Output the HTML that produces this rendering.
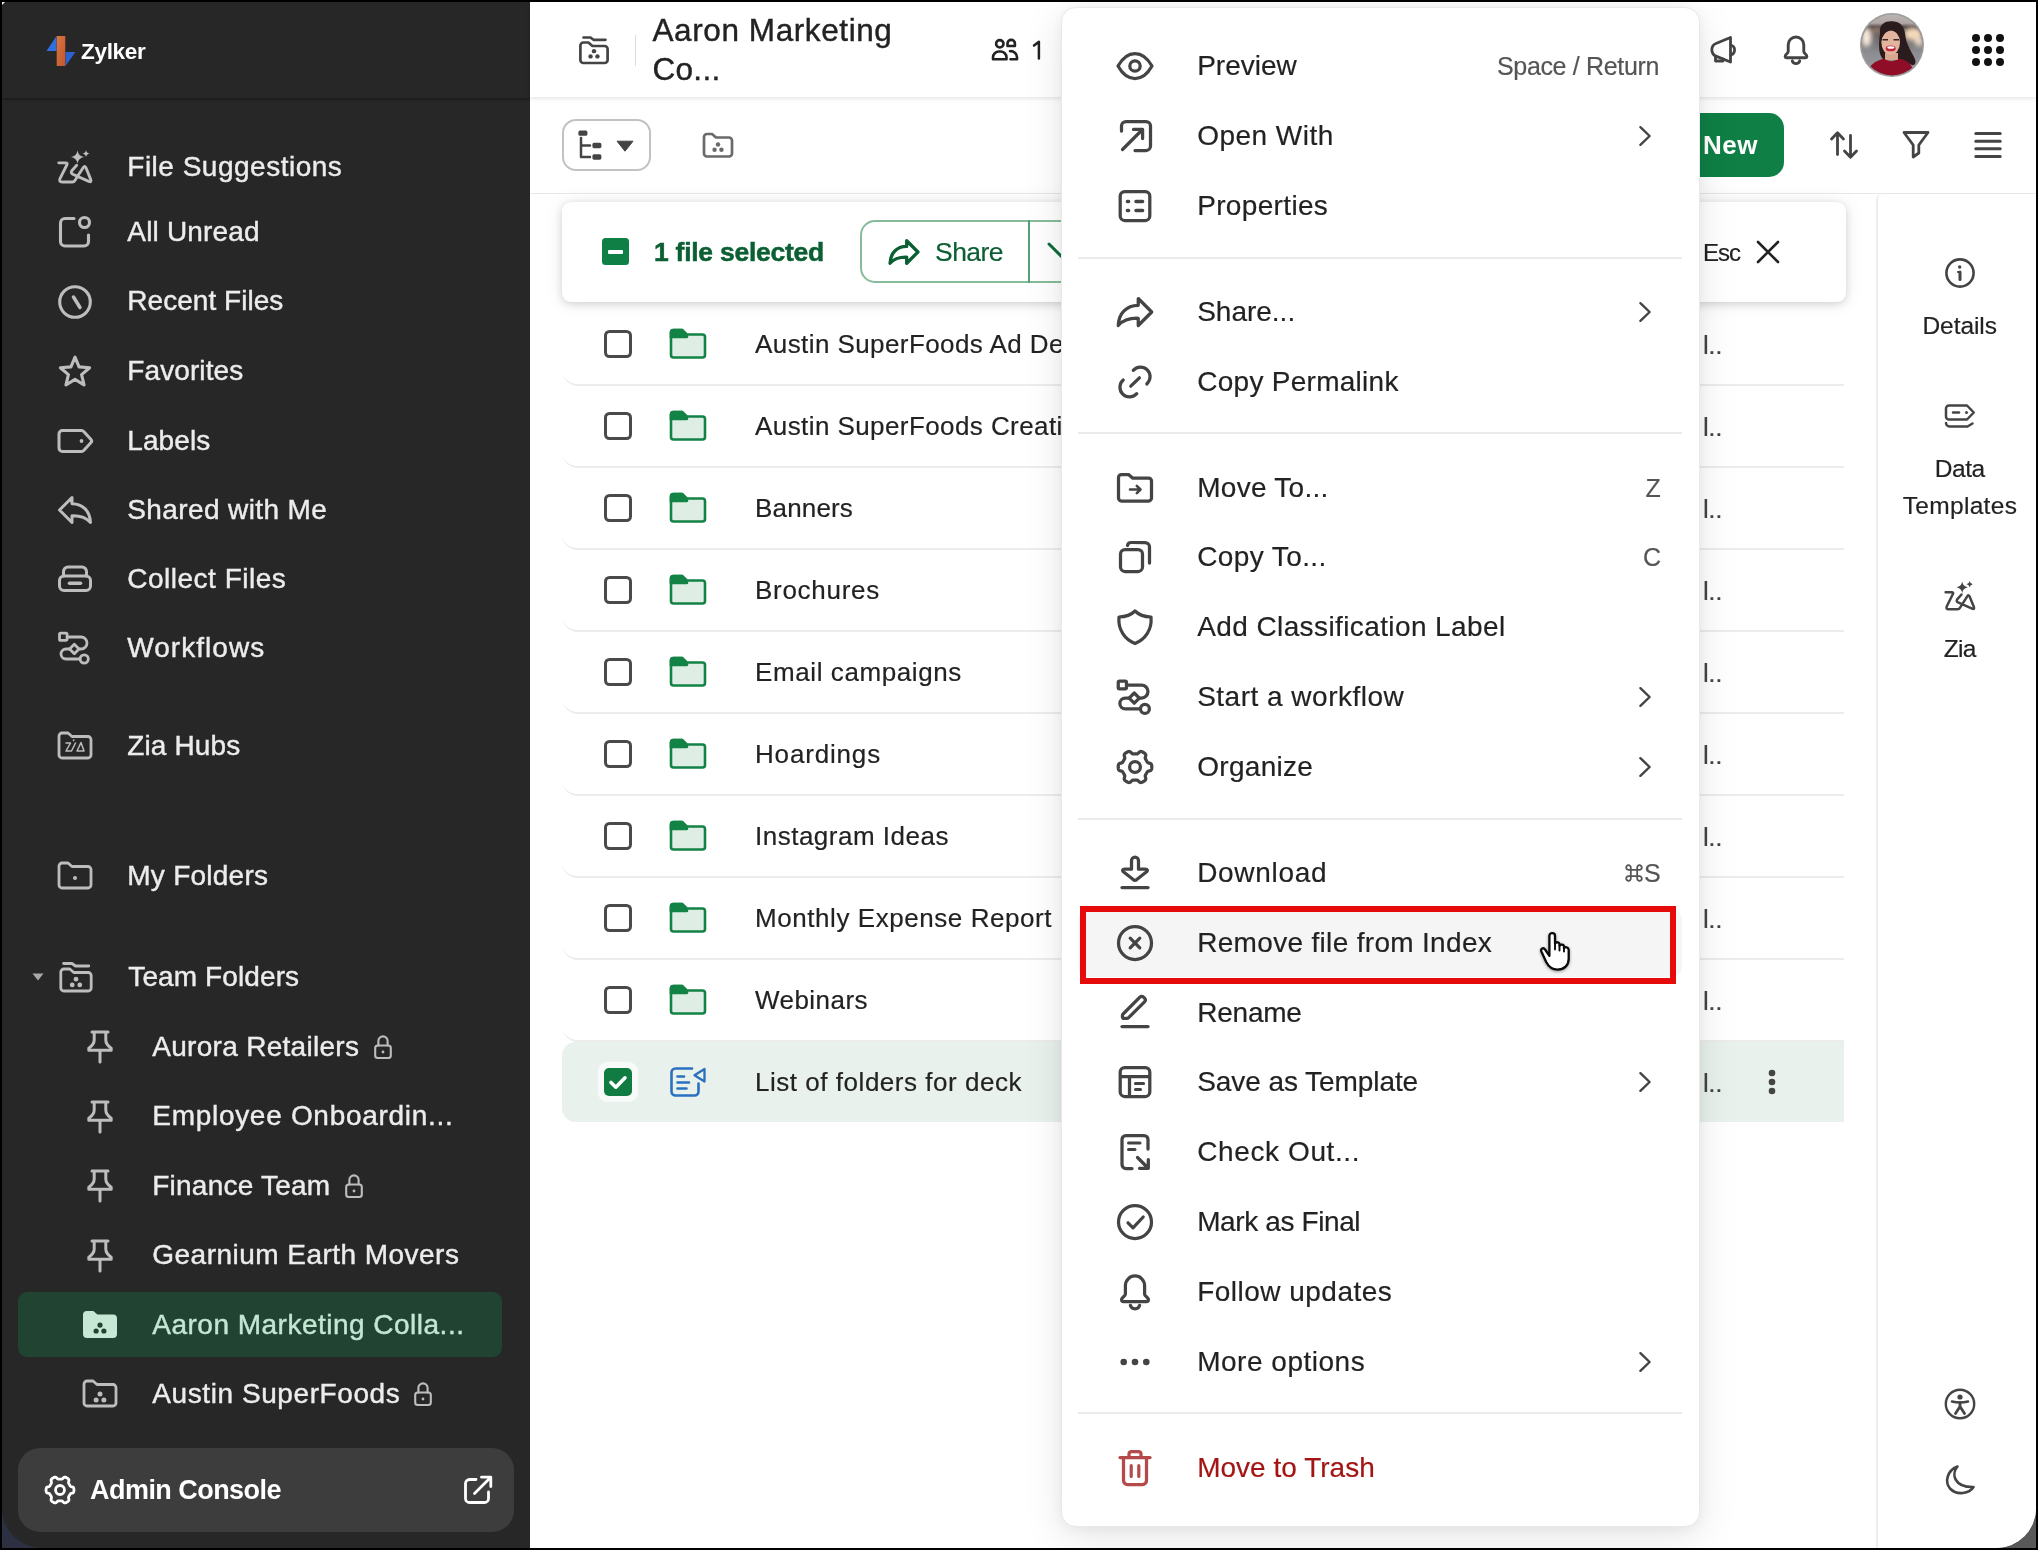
<!DOCTYPE html>
<html><head><meta charset="utf-8"><title>Zylker WorkDrive</title>
<style>
html,body{margin:0;padding:0;background:#000;}
body{width:2038px;height:1550px;overflow:hidden;font-family:"Liberation Sans",sans-serif;}
#root{position:relative;width:2038px;height:1550px;background:#000;overflow:hidden;opacity:0.999;}
#root div, #root svg{box-sizing:border-box;}

</style></head><body><div id="root">
<div style="position:absolute;left:2px;top:1500px;width:60px;height:48px;background:#2d3040"></div>
<div style="position:absolute;left:2px;top:2px;width:528px;height:1546px;background:#272727;border-bottom-left-radius:40px"></div>
<div style="position:absolute;left:2px;top:2px;width:528px;height:96px;background:#272727;box-shadow:0 1px 3px rgba(0,0,0,.45)"></div>
<div style="position:absolute;left:2px;top:2px;width:0;height:0;border-top:3px solid #eee;border-right:3px solid transparent"></div>
<svg style="position:absolute;left:40.5px;top:31px;overflow:visible;" width="40" height="40" viewBox="-20 -20 40 40"><defs><linearGradient id="lgo" x1="0" y1="0" x2="1" y2="1"><stop offset="0" stop-color="#d8783f"/><stop offset="1" stop-color="#c2542f"/></linearGradient></defs><polygon points="-14.5,0 -4.5,-15 -4.5,0" fill="#2f6fe0"/><polygon points="4.5,1 14.5,1 4.5,15" fill="#2a62cf"/><rect x="-4.3" y="-15" width="8.6" height="30" fill="url(#lgo)"/></svg>
<div style="position:absolute;left:81px;top:36.8px;line-height:29px;font-size:22.5px;font-weight:700;color:#fff;letter-spacing:-0.30px;white-space:pre;-webkit-text-stroke:0;">Zylker</div>
<div style="position:absolute;left:127.3px;top:148.8px;line-height:36px;font-size:28px;font-weight:400;color:#ececec;letter-spacing:0.50px;white-space:pre;-webkit-text-stroke:0.42px currentColor;">File Suggestions</div>
<svg style="position:absolute;left:53px;top:144.5px;overflow:visible;" width="44" height="44" viewBox="-22 -22 44 44"><g fill="none" stroke="#bdbdbd" stroke-width="2.8" stroke-linecap="round" stroke-linejoin="round"><g transform="scale(1.0)"><path d="M-16.3,-4.2 H-9.4 Q-6.9,-4.2 -8.2,-2 L-15,11.6 Q-16.4,15 -12.8,15 H-2.8 Q-0.9,15 0.1,13.2 L8.4,0.2 Q9.8,-1.8 10.9,0.6 L15.8,12.6 Q16.8,15.6 13.8,14.4 L-2.2,7.2 Q-4.6,6 -3.2,3.8 L1.7,-1.7"/><path d="M2.5,-16.6 Q3.4,-11 9,-10 Q3.4,-9 2.5,-3.4 Q1.6,-9 -4,-10 Q1.6,-11 2.5,-16.6 Z" fill="#bdbdbd" stroke="none"/><path d="M11,-17 Q11.5,-13.9 14.6,-13.4 Q11.5,-12.9 11,-9.8 Q10.5,-12.9 7.4,-13.4 Q10.5,-13.9 11,-17 Z" fill="#bdbdbd" stroke="none"/></g></g></svg>
<div style="position:absolute;left:127.3px;top:213.8px;line-height:36px;font-size:28px;font-weight:400;color:#ececec;letter-spacing:0.18px;white-space:pre;-webkit-text-stroke:0.42px currentColor;">All Unread</div>
<svg style="position:absolute;left:53px;top:209.5px;overflow:visible;" width="44" height="44" viewBox="-22 -22 44 44"><g fill="none" stroke="#bdbdbd" stroke-width="3.1" stroke-linecap="round" stroke-linejoin="round"><path d="M-1,-13.5 H-10 a4.5 4.5 0 0 0 -4.5 4.5 V9.5 a4.5 4.5 0 0 0 4.5 4.5 H9 a4.5 4.5 0 0 0 4.5 -4.5 V3"/><circle cx="9.5" cy="-9.5" r="5"/></g></svg>
<div style="position:absolute;left:127.3px;top:283.3px;line-height:36px;font-size:28px;font-weight:400;color:#ececec;letter-spacing:0.03px;white-space:pre;-webkit-text-stroke:0.42px currentColor;">Recent Files</div>
<svg style="position:absolute;left:53px;top:279.5px;overflow:visible;" width="44" height="44" viewBox="-22 -22 44 44"><g fill="none" stroke="#bdbdbd" stroke-width="3.1" stroke-linecap="round" stroke-linejoin="round"><circle r="15.3"/><path d="M-1.5,-5 L5,5.5" stroke-width="3.5"/></g></svg>
<div style="position:absolute;left:127.3px;top:353.3px;line-height:36px;font-size:28px;font-weight:400;color:#ececec;letter-spacing:0.09px;white-space:pre;-webkit-text-stroke:0.42px currentColor;">Favorites</div>
<svg style="position:absolute;left:53px;top:349px;overflow:visible;" width="44" height="44" viewBox="-22 -22 44 44"><g fill="none" stroke="#bdbdbd" stroke-width="3.1" stroke-linecap="round" stroke-linejoin="round"><polygon points="0.00,-13.90 4.06,-4.08 14.65,-3.26 6.56,3.63 9.05,13.96 0.00,8.40 -9.05,13.96 -6.56,3.63 -14.65,-3.26 -4.06,-4.08" /></g></svg>
<div style="position:absolute;left:127.3px;top:422.8px;line-height:36px;font-size:28px;font-weight:400;color:#ececec;letter-spacing:0.08px;white-space:pre;-webkit-text-stroke:0.42px currentColor;">Labels</div>
<svg style="position:absolute;left:53px;top:418.5px;overflow:visible;" width="44" height="44" viewBox="-22 -22 44 44"><g fill="none" stroke="#bdbdbd" stroke-width="3" stroke-linecap="round" stroke-linejoin="round"><path d="M-12.5,-10.5 H6.5 a3 3 0 0 1 2.2 1 L15.8,-1.8 a2.6 2.6 0 0 1 0 3.6 L8.7,9.5 a3 3 0 0 1 -2.2 1 H-12.5 a3.5 3.5 0 0 1 -3.5 -3.5 V-7 a3.5 3.5 0 0 1 3.5 -3.5 Z"/><circle cx="6.5" cy="0" r="1.9" fill="#bdbdbd" stroke="none"/></g></svg>
<div style="position:absolute;left:127.3px;top:491.8px;line-height:36px;font-size:28px;font-weight:400;color:#ececec;letter-spacing:0.39px;white-space:pre;-webkit-text-stroke:0.42px currentColor;">Shared with Me</div>
<svg style="position:absolute;left:53px;top:488px;overflow:visible;" width="44" height="44" viewBox="-22 -22 44 44"><g fill="none" stroke="#bdbdbd" stroke-width="3" stroke-linecap="round" stroke-linejoin="round"><path d="M-3,-12.5 L-15.5,0 L-3,12.5 V5.8 C6,5.5 11.5,8 15.5,12.5 C15,1 8,-6 -3,-6.2 Z"/></g></svg>
<div style="position:absolute;left:127.3px;top:561.3px;line-height:36px;font-size:28px;font-weight:400;color:#ececec;letter-spacing:0.50px;white-space:pre;-webkit-text-stroke:0.42px currentColor;">Collect Files</div>
<svg style="position:absolute;left:53px;top:557px;overflow:visible;" width="44" height="44" viewBox="-22 -22 44 44"><g fill="none" stroke="#bdbdbd" stroke-width="3" stroke-linecap="round" stroke-linejoin="round"><rect x="-15.5" y="-3" width="31" height="14.5" rx="4.5"/><path d="M-11.5,-3 V-7.5 a4.5 4.5 0 0 1 4.5 -4.5 H7 a4.5 4.5 0 0 1 4.5 4.5 V-3"/><path d="M-5.5,4.3 H5.5" stroke-width="3.6"/></g></svg>
<div style="position:absolute;left:127.3px;top:630.3px;line-height:36px;font-size:28px;font-weight:400;color:#ececec;letter-spacing:1.04px;white-space:pre;-webkit-text-stroke:0.42px currentColor;">Workflows</div>
<svg style="position:absolute;left:53px;top:626px;overflow:visible;" width="44" height="44" viewBox="-22 -22 44 44"><g fill="none" stroke="#bdbdbd" stroke-width="2.8" stroke-linecap="round" stroke-linejoin="round"><g transform="scale(1.0)"><rect x="-15.5" y="-14.8" width="7.6" height="7.2" rx="1.2"/><path d="M-7.8,-11 H6 a6 6 0 0 1 0 12 H3.8"/><path d="M-5.2,1 H-9 a5 5 0 0 0 0 10 H5"/><path d="M-0.7,-3.7 L4,1 L-0.7,5.7 L-5.4,1 Z"/><circle cx="9.2" cy="11" r="4.1"/></g></g></svg>
<div style="position:absolute;left:127.3px;top:728.3px;line-height:36px;font-size:28px;font-weight:400;color:#ececec;letter-spacing:0.12px;white-space:pre;-webkit-text-stroke:0.42px currentColor;">Zia Hubs</div>
<svg style="position:absolute;left:53px;top:724px;overflow:visible;" width="44" height="44" viewBox="-22 -22 44 44"><g fill="none" stroke="#bdbdbd" stroke-width="2.8" stroke-linecap="round" stroke-linejoin="round"><path d="M-16,-7 V-10 a3 3 0 0 1 3 -3 H-7 l4 3.5 H13 a3 3 0 0 1 3 3 V9 a3 3 0 0 1 -3 3 H-13 a3 3 0 0 1 -3 -3 Z"/><g stroke-width="1.5"><path d="M-9,-3 H-4.5 L-9,5 H-4.5"/><path d="M0.5,-3 L-3.5,5 M-1.5,-5.5 l.3,-.5"/><path d="M2,5 L6,-3.5 L9,5 Z"/></g></g></svg>
<div style="position:absolute;left:127.3px;top:857.8px;line-height:36px;font-size:28px;font-weight:400;color:#ececec;letter-spacing:0.25px;white-space:pre;-webkit-text-stroke:0.42px currentColor;">My Folders</div>
<svg style="position:absolute;left:53px;top:853.5px;overflow:visible;" width="44" height="44" viewBox="-22 -22 44 44"><g fill="none" stroke="#bdbdbd" stroke-width="2.8" stroke-linecap="round" stroke-linejoin="round"><path d="M-16,-7 V-10 a3 3 0 0 1 3 -3 H-7 l4 3.5 H13 a3 3 0 0 1 3 3 V9 a3 3 0 0 1 -3 3 H-13 a3 3 0 0 1 -3 -3 Z"/><circle cx="0" cy="2" r="2" fill="#bdbdbd" stroke="none"/></g></svg>
<svg style="position:absolute;left:30.5px;top:972px;overflow:visible;" width="14" height="10" viewBox="-7 -5 14 10"><polygon points="-5.5,-3.5 5.5,-3.5 0,3.5" fill="#a8a8a8"/></svg>
<svg style="position:absolute;left:54px;top:956px;overflow:visible;" width="44" height="44" viewBox="-22 -22 44 44"><g fill="none" stroke="#bdbdbd" stroke-width="2.8" stroke-linecap="round" stroke-linejoin="round"><path d="M-15.2,-3 V-6 a3 3 0 0 1 3 -3 H-6.199999999999999 l4 3.5 H12.2 a3 3 0 0 1 3 3 V10 a3 3 0 0 1 -3 3 H-12.2 a3 3 0 0 1 -3 -3 Z"/><path d="M-12.4,-14.5 H-4 l3.5,2.5 H12.8"/><circle cx="0" cy="1.15" r="2.4" fill="#bdbdbd" stroke="none"/><circle cx="-3.78" cy="6.95" r="2.4" fill="#bdbdbd" stroke="none"/><circle cx="3.78" cy="6.95" r="2.4" fill="#bdbdbd" stroke="none"/></g></svg>
<div style="position:absolute;left:128.3px;top:959.3px;line-height:36px;font-size:28px;font-weight:400;color:#ececec;letter-spacing:0.11px;white-space:pre;-webkit-text-stroke:0.42px currentColor;">Team Folders</div>
<div style="position:absolute;left:152.3px;top:1028.8px;line-height:36px;font-size:28px;font-weight:400;color:#ececec;letter-spacing:0.29px;white-space:pre;-webkit-text-stroke:0.42px currentColor;">Aurora Retailers</div>
<svg style="position:absolute;left:78px;top:1025px;overflow:visible;" width="44" height="44" viewBox="-22 -22 44 44"><g fill="none" stroke="#bdbdbd" stroke-width="3.0" stroke-linecap="round" stroke-linejoin="round"><path d="M-8,-15 H8 M-5.8,-14.5 V-7 C-5.8,-3 -8,-1 -11.2,1.2 V3.2 H11.2 V1.2 C8,-1 5.8,-3 5.8,-7 V-14.5 M0,3.5 V15"/></g></svg>
<svg style="position:absolute;left:360.5px;top:1025.5px;overflow:visible;" width="44" height="44" viewBox="-22 -22 44 44"><g fill="none" stroke="#bdbdbd" stroke-width="2.1" stroke-linecap="round" stroke-linejoin="round"><rect x="-7.8" y="-2.5" width="15.6" height="12.5" rx="2.5"/><path d="M-4.6,-2.5 V-7 a4.6 4.6 0 0 1 9.2 0 V-2.5"/><circle cx="0" cy="4" r="1.4" fill="#bdbdbd" stroke="none"/></g></svg>
<div style="position:absolute;left:152.3px;top:1098.3px;line-height:36px;font-size:28px;font-weight:400;color:#ececec;letter-spacing:0.70px;white-space:pre;-webkit-text-stroke:0.42px currentColor;">Employee Onboardin...</div>
<svg style="position:absolute;left:78px;top:1094.5px;overflow:visible;" width="44" height="44" viewBox="-22 -22 44 44"><g fill="none" stroke="#bdbdbd" stroke-width="3.0" stroke-linecap="round" stroke-linejoin="round"><path d="M-8,-15 H8 M-5.8,-14.5 V-7 C-5.8,-3 -8,-1 -11.2,1.2 V3.2 H11.2 V1.2 C8,-1 5.8,-3 5.8,-7 V-14.5 M0,3.5 V15"/></g></svg>
<div style="position:absolute;left:152.3px;top:1167.8px;line-height:36px;font-size:28px;font-weight:400;color:#ececec;letter-spacing:0.22px;white-space:pre;-webkit-text-stroke:0.42px currentColor;">Finance Team</div>
<svg style="position:absolute;left:78px;top:1164px;overflow:visible;" width="44" height="44" viewBox="-22 -22 44 44"><g fill="none" stroke="#bdbdbd" stroke-width="3.0" stroke-linecap="round" stroke-linejoin="round"><path d="M-8,-15 H8 M-5.8,-14.5 V-7 C-5.8,-3 -8,-1 -11.2,1.2 V3.2 H11.2 V1.2 C8,-1 5.8,-3 5.8,-7 V-14.5 M0,3.5 V15"/></g></svg>
<svg style="position:absolute;left:331.5px;top:1164.5px;overflow:visible;" width="44" height="44" viewBox="-22 -22 44 44"><g fill="none" stroke="#bdbdbd" stroke-width="2.1" stroke-linecap="round" stroke-linejoin="round"><rect x="-7.8" y="-2.5" width="15.6" height="12.5" rx="2.5"/><path d="M-4.6,-2.5 V-7 a4.6 4.6 0 0 1 9.2 0 V-2.5"/><circle cx="0" cy="4" r="1.4" fill="#bdbdbd" stroke="none"/></g></svg>
<div style="position:absolute;left:152.3px;top:1237.3px;line-height:36px;font-size:28px;font-weight:400;color:#ececec;letter-spacing:0.47px;white-space:pre;-webkit-text-stroke:0.42px currentColor;">Gearnium Earth Movers</div>
<svg style="position:absolute;left:78px;top:1233.5px;overflow:visible;" width="44" height="44" viewBox="-22 -22 44 44"><g fill="none" stroke="#bdbdbd" stroke-width="3.0" stroke-linecap="round" stroke-linejoin="round"><path d="M-8,-15 H8 M-5.8,-14.5 V-7 C-5.8,-3 -8,-1 -11.2,1.2 V3.2 H11.2 V1.2 C8,-1 5.8,-3 5.8,-7 V-14.5 M0,3.5 V15"/></g></svg>
<div style="position:absolute;left:18px;top:1292px;width:484px;height:65px;background:#204332;border-radius:9px"></div>
<div style="position:absolute;left:152.3px;top:1306.8px;line-height:36px;font-size:28px;font-weight:400;color:#c4e6d3;letter-spacing:0.49px;white-space:pre;-webkit-text-stroke:0.42px currentColor;">Aaron Marketing Colla...</div>
<svg style="position:absolute;left:78px;top:1303px;overflow:visible;" width="44" height="44" viewBox="-22 -22 44 44"><g fill="none" stroke="#c6e8d5" stroke-width="2.8" stroke-linecap="round" stroke-linejoin="round"><path d="M-16,-7 V-10 a3 3 0 0 1 3 -3 H-7 l4 3.5 H13 a3 3 0 0 1 3 3 V9 a3 3 0 0 1 -3 3 H-13 a3 3 0 0 1 -3 -3 Z" fill="#c6e8d5" stroke="#c6e8d5" stroke-width="2"/><circle cx="0" cy="0.07" r="2.6" fill="#204332" stroke="none"/><circle cx="-3.87" cy="6.01" r="2.6" fill="#204332" stroke="none"/><circle cx="3.87" cy="6.01" r="2.6" fill="#204332" stroke="none"/></g></svg>
<div style="position:absolute;left:152.3px;top:1375.8px;line-height:36px;font-size:28px;font-weight:400;color:#ececec;letter-spacing:0.58px;white-space:pre;-webkit-text-stroke:0.42px currentColor;">Austin SuperFoods</div>
<svg style="position:absolute;left:78px;top:1372px;overflow:visible;" width="44" height="44" viewBox="-22 -22 44 44"><g fill="none" stroke="#bdbdbd" stroke-width="2.8" stroke-linecap="round" stroke-linejoin="round"><path d="M-16,-7 V-10 a3 3 0 0 1 3 -3 H-7 l4 3.5 H13 a3 3 0 0 1 3 3 V9 a3 3 0 0 1 -3 3 H-13 a3 3 0 0 1 -3 -3 Z"/><circle cx="0" cy="0.07" r="2.5" fill="#bdbdbd" stroke="none"/><circle cx="-3.87" cy="6.01" r="2.5" fill="#bdbdbd" stroke="none"/><circle cx="3.87" cy="6.01" r="2.5" fill="#bdbdbd" stroke="none"/></g></svg>
<svg style="position:absolute;left:401px;top:1372.5px;overflow:visible;" width="44" height="44" viewBox="-22 -22 44 44"><g fill="none" stroke="#bdbdbd" stroke-width="2.1" stroke-linecap="round" stroke-linejoin="round"><rect x="-7.8" y="-2.5" width="15.6" height="12.5" rx="2.5"/><path d="M-4.6,-2.5 V-7 a4.6 4.6 0 0 1 9.2 0 V-2.5"/><circle cx="0" cy="4" r="1.4" fill="#bdbdbd" stroke="none"/></g></svg>
<div style="position:absolute;left:18px;top:1448px;width:496px;height:84px;background:#3d3d3d;border-radius:22px"></div>
<svg style="position:absolute;left:38px;top:1468px;overflow:visible;" width="44" height="44" viewBox="-22 -22 44 44"><g fill="none" stroke="#fff" stroke-width="3.373493975903614" stroke-linecap="round" stroke-linejoin="round"><g transform="scale(0.83)"><path d="M16.80,0.00 L16.78,0.73 L16.71,1.46 L16.57,2.18 L16.27,2.87 L15.61,3.46 L14.44,3.87 L13.27,4.18 L12.58,4.58 L12.19,5.05 L11.90,5.55 L11.62,6.05 L11.34,6.55 L11.05,7.04 L10.75,7.53 L10.47,8.03 L10.25,8.60 L10.26,9.40 L10.57,10.57 L10.80,11.79 L10.62,12.65 L10.17,13.26 L9.62,13.74 L9.02,14.16 L8.40,14.55 L7.75,14.90 L7.09,15.20 L6.39,15.44 L5.65,15.52 L4.81,15.25 L3.87,14.44 L3.01,13.58 L2.32,13.18 L1.72,13.08 L1.14,13.08 L0.57,13.09 L0.00,13.10 L-0.57,13.09 L-1.14,13.08 L-1.72,13.08 L-2.32,13.18 L-3.01,13.58 L-3.87,14.44 L-4.81,15.25 L-5.65,15.52 L-6.39,15.44 L-7.09,15.20 L-7.75,14.90 L-8.40,14.55 L-9.02,14.16 L-9.62,13.74 L-10.17,13.26 L-10.62,12.65 L-10.80,11.79 L-10.57,10.57 L-10.26,9.40 L-10.25,8.60 L-10.47,8.03 L-10.75,7.53 L-11.05,7.04 L-11.34,6.55 L-11.62,6.05 L-11.90,5.55 L-12.19,5.05 L-12.58,4.58 L-13.27,4.18 L-14.44,3.87 L-15.61,3.46 L-16.27,2.87 L-16.57,2.18 L-16.71,1.46 L-16.78,0.73 L-16.80,0.00 L-16.78,-0.73 L-16.71,-1.46 L-16.57,-2.18 L-16.27,-2.87 L-15.61,-3.46 L-14.44,-3.87 L-13.27,-4.18 L-12.58,-4.58 L-12.19,-5.05 L-11.90,-5.55 L-11.62,-6.05 L-11.34,-6.55 L-11.05,-7.04 L-10.75,-7.53 L-10.47,-8.03 L-10.25,-8.60 L-10.26,-9.40 L-10.57,-10.57 L-10.80,-11.79 L-10.62,-12.65 L-10.17,-13.26 L-9.62,-13.74 L-9.02,-14.16 L-8.40,-14.55 L-7.75,-14.90 L-7.09,-15.20 L-6.39,-15.44 L-5.65,-15.52 L-4.81,-15.25 L-3.87,-14.44 L-3.01,-13.58 L-2.32,-13.18 L-1.72,-13.08 L-1.14,-13.08 L-0.57,-13.09 L-0.00,-13.10 L0.57,-13.09 L1.14,-13.08 L1.72,-13.08 L2.32,-13.18 L3.01,-13.58 L3.87,-14.44 L4.81,-15.25 L5.65,-15.52 L6.39,-15.44 L7.09,-15.20 L7.75,-14.90 L8.40,-14.55 L9.02,-14.16 L9.62,-13.74 L10.17,-13.26 L10.62,-12.65 L10.80,-11.79 L10.57,-10.57 L10.26,-9.40 L10.25,-8.60 L10.47,-8.03 L10.75,-7.53 L11.05,-7.04 L11.34,-6.55 L11.62,-6.05 L11.90,-5.55 L12.19,-5.05 L12.58,-4.58 L13.27,-4.18 L14.44,-3.87 L15.61,-3.46 L16.27,-2.87 L16.57,-2.18 L16.71,-1.46 L16.78,-0.73 Z"/><circle r="5.4"/></g></g></svg>
<div style="position:absolute;left:90px;top:1473.3px;line-height:35px;font-size:27px;font-weight:700;color:#fff;letter-spacing:-0.54px;white-space:pre;-webkit-text-stroke:0;">Admin Console</div>
<svg style="position:absolute;left:456px;top:1468px;overflow:visible;" width="44" height="44" viewBox="-22 -22 44 44"><g fill="none" stroke="#fff" stroke-width="2.8" stroke-linecap="round" stroke-linejoin="round"><path d="M-2,-10.5 H-8.5 a4 4 0 0 0 -4 4 V8.5 a4 4 0 0 0 4 4 H6.5 a4 4 0 0 0 4 -4 V2"/><path d="M-3.5,3.5 L12.5,-12.5 M3.5,-12.8 H12.8 V-3.5"/></g></svg>
<div style="position:absolute;left:1986px;top:1498px;width:50px;height:50px;background:#585858"></div>
<div style="position:absolute;left:530px;top:2px;width:1506px;height:1546px;background:#fff;border-bottom-right-radius:40px"></div>
<div style="position:absolute;left:530px;top:98px;width:1506px;height:95.5px;background:#fff;border-bottom:1.6px solid #e8e8e8"></div>
<div style="position:absolute;left:530px;top:2px;width:1506px;height:95px;background:#fff;box-shadow:0 1px 5px rgba(0,0,0,.13)"></div>
<svg style="position:absolute;left:572px;top:28.5px;overflow:visible;" width="44" height="44" viewBox="-22 -22 44 44"><g fill="none" stroke="#444" stroke-width="2.7" stroke-linecap="round" stroke-linejoin="round"><path d="M-13.6,-2.5 V-5.5 a3 3 0 0 1 3 -3 H-5.6 l4 3.5 H10.6 a3 3 0 0 1 3 3 V9 a3 3 0 0 1 -3 3 H-10.6 a3 3 0 0 1 -3 -3 Z"/><path d="M-10.5,-13.5 H-3.5 l3,2.3 H11.5"/><circle cx="0" cy="0.16" r="2.2" fill="#444" stroke="none"/><circle cx="-3.43" cy="5.42" r="2.2" fill="#444" stroke="none"/><circle cx="3.43" cy="5.42" r="2.2" fill="#444" stroke="none"/></g></svg>
<div style="position:absolute;left:634.5px;top:35px;width:1.5px;height:31px;background:#ddd"></div>
<div style="position:absolute;left:652.5px;top:9.9px;line-height:41px;font-size:31.5px;font-weight:400;color:#222;letter-spacing:0.59px;white-space:pre;-webkit-text-stroke:0.18px currentColor;-webkit-text-stroke:0.4px #222 !important;">Aaron Marketing</div>
<div style="position:absolute;left:652.5px;top:49.2px;line-height:41px;font-size:31.5px;font-weight:400;color:#222;letter-spacing:0.29px;white-space:pre;-webkit-text-stroke:0.18px currentColor;-webkit-text-stroke:0.4px #222 !important;">Co...</div>
<svg style="position:absolute;left:983px;top:28px;overflow:visible;" width="44" height="44" viewBox="-22 -22 44 44"><g fill="none" stroke="#222" stroke-width="2.6" stroke-linecap="round" stroke-linejoin="round"><circle cx="-5.2" cy="-6.2" r="3.7"/><path d="M-12,9.3 V7.5 a6 6 0 0 1 6 -6 H-4.5 a6 6 0 0 1 6 6 V9.3 Z"/><path d="M2.5,-4 V-6.4 a3.7 3.7 0 0 1 7.4 0 V-4 Z"/><path d="M5,1.2 a6.2 6.2 0 0 1 7,6 V9.3 H5.5"/></g></svg>
<svg style="position:absolute;left:1015.5px;top:27.6px;overflow:visible;" width="44" height="44" viewBox="-22 -22 44 44"><g fill="none" stroke="#222" stroke-width="2.5" stroke-linecap="round" stroke-linejoin="round"><path d="M-4,-4.4 L0.9,-8.2 V8.5"/></g></svg>
<svg style="position:absolute;left:1702px;top:28px;overflow:visible;" width="44" height="44" viewBox="-22 -22 44 44"><g fill="none" stroke="#444" stroke-width="2.8" stroke-linecap="round" stroke-linejoin="round"><path d="M6.5,-12.5 L-7.5,-6.8 a7 7 0 0 0 0 13.2 L6.5,12 Z"/><path d="M6.8,-5 a5.2 5.2 0 0 1 0 10"/><path d="M-8.5,6.8 V11 H-1 V9.2"/></g></svg>
<svg style="position:absolute;left:1774px;top:28px;overflow:visible;" width="44" height="44" viewBox="-22 -22 44 44"><g fill="none" stroke="#444" stroke-width="3.5802469135802464" stroke-linecap="round" stroke-linejoin="round"><g transform="scale(0.81)"><path d="M-9.6,2 V-6.4 a9.6 9.6 0 0 1 19.2 0 V2 C9.6,4.5 13.6,5.3 13.4,8 Q13.2,9.6 11.5,9.6 H-11.5 Q-13.2,9.6 -13.4,8 C-13.6,5.3 -9.6,4.5 -9.6,2 Z"/><path d="M-4.6,13.4 a4.8 4.8 0 0 0 9.2 0"/></g></g></svg>
<svg style="position:absolute;left:1859px;top:12px;overflow:visible;" width="66" height="66" viewBox="-33 -33 66 66"><defs><clipPath id="avc"><circle r="30.4"/></clipPath><filter id="avbl" x="-20%" y="-20%" width="140%" height="140%"><feGaussianBlur stdDeviation="0.65"/></filter><filter id="avbl2" x="-20%" y="-20%" width="140%" height="140%"><feGaussianBlur stdDeviation="2.4"/></filter><linearGradient id="avb" x1="0" y1="0" x2="0" y2="1"><stop offset="0" stop-color="#bdb5b5"/><stop offset=".16" stop-color="#b0a6a6"/><stop offset=".22" stop-color="#4a3f3f"/><stop offset=".36" stop-color="#6b6463"/><stop offset=".62" stop-color="#8b8d92"/><stop offset="1" stop-color="#9a9ca0"/></linearGradient></defs><circle r="32" fill="#9c9c9c"/><g clip-path="url(#avc)"><rect x="-32" y="-32" width="64" height="64" fill="url(#avb)"/><g filter="url(#avbl2)"><ellipse cx="-25.5" cy="-8" rx="5" ry="10" fill="#fbeee0"/><ellipse cx="21" cy="-11" rx="9.5" ry="6.5" fill="#f6d9bb"/><ellipse cx="27" cy="-3" rx="4" ry="4" fill="#f3e3d2"/><ellipse cx="-15" cy="-15" rx="4" ry="3" fill="#a78974"/></g><g filter="url(#avbl)"><path d="M-12,-12 C-13,-23 -4,-24.5 2,-23.5 C10,-23 13,-16 13.5,-8 C15,0 19,6 22,12 C25,17 23,21 20,20 L8,16 L-9,14 C-13,10 -14,2 -12,-12 Z" fill="#2a1d1f"/><path d="M-7,8 H6 V15 H-7 Z" fill="#d9a790"/><path d="M-25,32 C-24,20 -18,16.5 -8,13.5 C-3,17 3,17 7,13.5 C14,15 21,18 24,32 Z" fill="#8f1027"/><ellipse cx="-1.3" cy="-2.5" rx="9.3" ry="12.2" fill="#e2b39d"/><path d="M-11,-4 C-11.5,-14 -6,-17 -1,-16.5 C5,-16.5 9,-12 9.8,-3 C7.5,-10 4,-14.2 -1,-14.6 C-6,-14.2 -9,-10.5 -11,-4 Z" fill="#2a1d1f"/><path d="M9,-6 C10,0 11,6 8,12 L13,14 L14,0 Z" fill="#2a1d1f"/><path d="M-9.5,-5.2 h5.5 M1.5,-5.2 h5.5" stroke="#3a2824" stroke-width="1.5" fill="none"/><ellipse cx="-1.3" cy="3.4" rx="5" ry="2.9" fill="#c4263a"/><ellipse cx="-1.2" cy="2.5" rx="3.6" ry="1.3" fill="#fff"/></g></g></svg>
<svg style="position:absolute;left:1968px;top:30px;overflow:visible;" width="40" height="40" viewBox="-20 -20 40 40"><circle cx="-12" cy="-12" r="4" fill="#111"/><circle cx="-12" cy="0" r="4" fill="#111"/><circle cx="-12" cy="12" r="4" fill="#111"/><circle cx="0" cy="-12" r="4" fill="#111"/><circle cx="0" cy="0" r="4" fill="#111"/><circle cx="0" cy="12" r="4" fill="#111"/><circle cx="12" cy="-12" r="4" fill="#111"/><circle cx="12" cy="0" r="4" fill="#111"/><circle cx="12" cy="12" r="4" fill="#111"/></svg>
<div style="position:absolute;left:562px;top:119px;width:89px;height:52px;border:2px solid #c2c2c2;border-radius:14px;box-sizing:border-box;background:#fff"></div>
<svg style="position:absolute;left:569px;top:123px;overflow:visible;" width="44" height="44" viewBox="-22 -22 44 44"><g fill="none" stroke="#444" stroke-width="2.8" stroke-linecap="round" stroke-linejoin="round"><path d="M-10,-7 V12 H-1 M-10,0.5 H-1" stroke-width="2.5"/><g fill="#444" stroke="none"><rect x="-12.6" y="-14.6" width="9" height="5.4" rx="1.6"/><rect x="1.4" y="-2.2" width="9" height="5.4" rx="1.6"/><rect x="1.4" y="9.3" width="9" height="5.4" rx="1.6"/></g></g></svg>
<svg style="position:absolute;left:616px;top:139.6px;overflow:visible;" width="18" height="12" viewBox="-9 -6 18 12"><polygon points="-8,-4.8 8,-4.8 0,5.2" fill="#444" stroke="#444" stroke-width="1" stroke-linejoin="round"/></svg>
<svg style="position:absolute;left:696px;top:123px;overflow:visible;" width="44" height="44" viewBox="-22 -22 44 44"><g fill="none" stroke="#6a6a6a" stroke-width="2.7" stroke-linecap="round" stroke-linejoin="round"><path d="M-14,-5 V-8 a3 3 0 0 1 3 -3 H-6 l4 3.5 H11 a3 3 0 0 1 3 3 V8.5 a3 3 0 0 1 -3 3 H-11 a3 3 0 0 1 -3 -3 Z"/><circle cx="0" cy="-0.44" r="2.2" fill="#6a6a6a" stroke="none"/><circle cx="-3.43" cy="4.82" r="2.2" fill="#6a6a6a" stroke="none"/><circle cx="3.43" cy="4.82" r="2.2" fill="#6a6a6a" stroke="none"/></g></svg>
<div style="position:absolute;left:1600px;top:113px;width:184px;height:64px;background:#0f7f45;border-radius:15px"></div>
<div style="position:absolute;left:1703px;top:128.3px;line-height:34px;font-size:26px;font-weight:700;color:#fff;letter-spacing:0.51px;white-space:pre;-webkit-text-stroke:0;">New</div>
<svg style="position:absolute;left:1821.5px;top:123px;overflow:visible;" width="44" height="44" viewBox="-22 -22 44 44"><g fill="none" stroke="#444" stroke-width="2.8" stroke-linecap="round" stroke-linejoin="round"><path d="M-6.5,9.5 V-12 M-12.5,-6 L-6.5,-12.3 L-0.5,-6"/><path d="M6.5,-9.5 V12 M0.5,6 L6.5,12.3 L12.5,6"/></g></svg>
<svg style="position:absolute;left:1894px;top:123px;overflow:visible;" width="44" height="44" viewBox="-22 -22 44 44"><g fill="none" stroke="#444" stroke-width="2.8" stroke-linecap="round" stroke-linejoin="round"><path d="M-12,-12.5 H12 L2.8,0 V8 L-2.8,12 V0 Z"/></g></svg>
<svg style="position:absolute;left:1966px;top:122.7px;overflow:visible;" width="44" height="44" viewBox="-22 -22 44 44"><g fill="none" stroke="#444" stroke-width="3" stroke-linecap="round" stroke-linejoin="round"><path d="M-12.2,-11.5 H12.2 M-12.2,-3.8 H12.2 M-12.2,3.8 H12.2 M-12.2,11.5 H12.2"/></g></svg>
<div style="position:absolute;left:562px;top:303px;width:1282px;height:82.6px;border-bottom:2px solid #ececec;border-bottom-left-radius:16px"></div>
<div style="position:absolute;left:604.2px;top:330.3px;width:27.4px;height:27.4px;border:3px solid #4a4a4a;border-radius:5.5px;box-sizing:border-box;background:#fff"></div>
<svg style="position:absolute;left:666px;top:322px;overflow:visible;" width="44" height="44" viewBox="-22 -22 44 44"><g fill="none" stroke="#128345" stroke-width="2.6" stroke-linecap="round" stroke-linejoin="round"><path d="M-17,-7 V-11.5 a2.5 2.5 0 0 1 2.5 -2.5 H-6 l4.5,4.5 H14.5 a2.5 2.5 0 0 1 2.5 2.5 V11 a2.5 2.5 0 0 1 -2.5 2.5 H-14.5 a2.5 2.5 0 0 1 -2.5 -2.5 Z" fill="#deeee5"/><path d="M-17,-7 V-11.5 a2.5 2.5 0 0 1 2.5 -2.5 H-6 l4.5,4.5 V-7 Z" fill="#128345"/><path d="M-17,-7.3 H-1" /></g></svg>
<div style="position:absolute;left:755px;top:327.3px;line-height:34px;font-size:26px;font-weight:400;color:#222;letter-spacing:0.00px;white-space:pre;-webkit-text-stroke:0.18px currentColor;letter-spacing:0.42px !important;">Austin SuperFoods Ad Designs</div>
<div style="position:absolute;left:1703px;top:328.3px;line-height:34px;font-size:26px;font-weight:400;color:#444;letter-spacing:-0.41px;white-space:pre;-webkit-text-stroke:0.18px currentColor;">l..</div>
<div style="position:absolute;left:562px;top:385px;width:1282px;height:82.6px;border-bottom:2px solid #ececec;border-bottom-left-radius:16px"></div>
<div style="position:absolute;left:604.2px;top:412.3px;width:27.4px;height:27.4px;border:3px solid #4a4a4a;border-radius:5.5px;box-sizing:border-box;background:#fff"></div>
<svg style="position:absolute;left:666px;top:404px;overflow:visible;" width="44" height="44" viewBox="-22 -22 44 44"><g fill="none" stroke="#128345" stroke-width="2.6" stroke-linecap="round" stroke-linejoin="round"><path d="M-17,-7 V-11.5 a2.5 2.5 0 0 1 2.5 -2.5 H-6 l4.5,4.5 H14.5 a2.5 2.5 0 0 1 2.5 2.5 V11 a2.5 2.5 0 0 1 -2.5 2.5 H-14.5 a2.5 2.5 0 0 1 -2.5 -2.5 Z" fill="#deeee5"/><path d="M-17,-7 V-11.5 a2.5 2.5 0 0 1 2.5 -2.5 H-6 l4.5,4.5 V-7 Z" fill="#128345"/><path d="M-17,-7.3 H-1" /></g></svg>
<div style="position:absolute;left:755px;top:409.3px;line-height:34px;font-size:26px;font-weight:400;color:#222;letter-spacing:0.00px;white-space:pre;-webkit-text-stroke:0.18px currentColor;letter-spacing:0.42px !important;">Austin SuperFoods Creatives</div>
<div style="position:absolute;left:1703px;top:410.3px;line-height:34px;font-size:26px;font-weight:400;color:#444;letter-spacing:-0.41px;white-space:pre;-webkit-text-stroke:0.18px currentColor;">l..</div>
<div style="position:absolute;left:562px;top:467px;width:1282px;height:82.6px;border-bottom:2px solid #ececec;border-bottom-left-radius:16px"></div>
<div style="position:absolute;left:604.2px;top:494.3px;width:27.4px;height:27.4px;border:3px solid #4a4a4a;border-radius:5.5px;box-sizing:border-box;background:#fff"></div>
<svg style="position:absolute;left:666px;top:486px;overflow:visible;" width="44" height="44" viewBox="-22 -22 44 44"><g fill="none" stroke="#128345" stroke-width="2.6" stroke-linecap="round" stroke-linejoin="round"><path d="M-17,-7 V-11.5 a2.5 2.5 0 0 1 2.5 -2.5 H-6 l4.5,4.5 H14.5 a2.5 2.5 0 0 1 2.5 2.5 V11 a2.5 2.5 0 0 1 -2.5 2.5 H-14.5 a2.5 2.5 0 0 1 -2.5 -2.5 Z" fill="#deeee5"/><path d="M-17,-7 V-11.5 a2.5 2.5 0 0 1 2.5 -2.5 H-6 l4.5,4.5 V-7 Z" fill="#128345"/><path d="M-17,-7.3 H-1" /></g></svg>
<div style="position:absolute;left:755px;top:491.3px;line-height:34px;font-size:26px;font-weight:400;color:#222;letter-spacing:0.17px;white-space:pre;-webkit-text-stroke:0.18px currentColor;">Banners</div>
<div style="position:absolute;left:1703px;top:492.3px;line-height:34px;font-size:26px;font-weight:400;color:#444;letter-spacing:-0.41px;white-space:pre;-webkit-text-stroke:0.18px currentColor;">l..</div>
<div style="position:absolute;left:562px;top:549px;width:1282px;height:82.6px;border-bottom:2px solid #ececec;border-bottom-left-radius:16px"></div>
<div style="position:absolute;left:604.2px;top:576.3px;width:27.4px;height:27.4px;border:3px solid #4a4a4a;border-radius:5.5px;box-sizing:border-box;background:#fff"></div>
<svg style="position:absolute;left:666px;top:568px;overflow:visible;" width="44" height="44" viewBox="-22 -22 44 44"><g fill="none" stroke="#128345" stroke-width="2.6" stroke-linecap="round" stroke-linejoin="round"><path d="M-17,-7 V-11.5 a2.5 2.5 0 0 1 2.5 -2.5 H-6 l4.5,4.5 H14.5 a2.5 2.5 0 0 1 2.5 2.5 V11 a2.5 2.5 0 0 1 -2.5 2.5 H-14.5 a2.5 2.5 0 0 1 -2.5 -2.5 Z" fill="#deeee5"/><path d="M-17,-7 V-11.5 a2.5 2.5 0 0 1 2.5 -2.5 H-6 l4.5,4.5 V-7 Z" fill="#128345"/><path d="M-17,-7.3 H-1" /></g></svg>
<div style="position:absolute;left:755px;top:573.3px;line-height:34px;font-size:26px;font-weight:400;color:#222;letter-spacing:0.72px;white-space:pre;-webkit-text-stroke:0.18px currentColor;">Brochures</div>
<div style="position:absolute;left:1703px;top:574.3px;line-height:34px;font-size:26px;font-weight:400;color:#444;letter-spacing:-0.41px;white-space:pre;-webkit-text-stroke:0.18px currentColor;">l..</div>
<div style="position:absolute;left:562px;top:631px;width:1282px;height:82.6px;border-bottom:2px solid #ececec;border-bottom-left-radius:16px"></div>
<div style="position:absolute;left:604.2px;top:658.3px;width:27.4px;height:27.4px;border:3px solid #4a4a4a;border-radius:5.5px;box-sizing:border-box;background:#fff"></div>
<svg style="position:absolute;left:666px;top:650px;overflow:visible;" width="44" height="44" viewBox="-22 -22 44 44"><g fill="none" stroke="#128345" stroke-width="2.6" stroke-linecap="round" stroke-linejoin="round"><path d="M-17,-7 V-11.5 a2.5 2.5 0 0 1 2.5 -2.5 H-6 l4.5,4.5 H14.5 a2.5 2.5 0 0 1 2.5 2.5 V11 a2.5 2.5 0 0 1 -2.5 2.5 H-14.5 a2.5 2.5 0 0 1 -2.5 -2.5 Z" fill="#deeee5"/><path d="M-17,-7 V-11.5 a2.5 2.5 0 0 1 2.5 -2.5 H-6 l4.5,4.5 V-7 Z" fill="#128345"/><path d="M-17,-7.3 H-1" /></g></svg>
<div style="position:absolute;left:755px;top:655.3px;line-height:34px;font-size:26px;font-weight:400;color:#222;letter-spacing:0.60px;white-space:pre;-webkit-text-stroke:0.18px currentColor;">Email campaigns</div>
<div style="position:absolute;left:1703px;top:656.3px;line-height:34px;font-size:26px;font-weight:400;color:#444;letter-spacing:-0.41px;white-space:pre;-webkit-text-stroke:0.18px currentColor;">l..</div>
<div style="position:absolute;left:562px;top:713px;width:1282px;height:82.6px;border-bottom:2px solid #ececec;border-bottom-left-radius:16px"></div>
<div style="position:absolute;left:604.2px;top:740.3px;width:27.4px;height:27.4px;border:3px solid #4a4a4a;border-radius:5.5px;box-sizing:border-box;background:#fff"></div>
<svg style="position:absolute;left:666px;top:732px;overflow:visible;" width="44" height="44" viewBox="-22 -22 44 44"><g fill="none" stroke="#128345" stroke-width="2.6" stroke-linecap="round" stroke-linejoin="round"><path d="M-17,-7 V-11.5 a2.5 2.5 0 0 1 2.5 -2.5 H-6 l4.5,4.5 H14.5 a2.5 2.5 0 0 1 2.5 2.5 V11 a2.5 2.5 0 0 1 -2.5 2.5 H-14.5 a2.5 2.5 0 0 1 -2.5 -2.5 Z" fill="#deeee5"/><path d="M-17,-7 V-11.5 a2.5 2.5 0 0 1 2.5 -2.5 H-6 l4.5,4.5 V-7 Z" fill="#128345"/><path d="M-17,-7.3 H-1" /></g></svg>
<div style="position:absolute;left:755px;top:737.3px;line-height:34px;font-size:26px;font-weight:400;color:#222;letter-spacing:0.83px;white-space:pre;-webkit-text-stroke:0.18px currentColor;">Hoardings</div>
<div style="position:absolute;left:1703px;top:738.3px;line-height:34px;font-size:26px;font-weight:400;color:#444;letter-spacing:-0.41px;white-space:pre;-webkit-text-stroke:0.18px currentColor;">l..</div>
<div style="position:absolute;left:562px;top:795px;width:1282px;height:82.6px;border-bottom:2px solid #ececec;border-bottom-left-radius:16px"></div>
<div style="position:absolute;left:604.2px;top:822.3px;width:27.4px;height:27.4px;border:3px solid #4a4a4a;border-radius:5.5px;box-sizing:border-box;background:#fff"></div>
<svg style="position:absolute;left:666px;top:814px;overflow:visible;" width="44" height="44" viewBox="-22 -22 44 44"><g fill="none" stroke="#128345" stroke-width="2.6" stroke-linecap="round" stroke-linejoin="round"><path d="M-17,-7 V-11.5 a2.5 2.5 0 0 1 2.5 -2.5 H-6 l4.5,4.5 H14.5 a2.5 2.5 0 0 1 2.5 2.5 V11 a2.5 2.5 0 0 1 -2.5 2.5 H-14.5 a2.5 2.5 0 0 1 -2.5 -2.5 Z" fill="#deeee5"/><path d="M-17,-7 V-11.5 a2.5 2.5 0 0 1 2.5 -2.5 H-6 l4.5,4.5 V-7 Z" fill="#128345"/><path d="M-17,-7.3 H-1" /></g></svg>
<div style="position:absolute;left:755px;top:819.3px;line-height:34px;font-size:26px;font-weight:400;color:#222;letter-spacing:0.50px;white-space:pre;-webkit-text-stroke:0.18px currentColor;">Instagram Ideas</div>
<div style="position:absolute;left:1703px;top:820.3px;line-height:34px;font-size:26px;font-weight:400;color:#444;letter-spacing:-0.41px;white-space:pre;-webkit-text-stroke:0.18px currentColor;">l..</div>
<div style="position:absolute;left:562px;top:877px;width:1282px;height:82.6px;border-bottom:2px solid #ececec;border-bottom-left-radius:16px"></div>
<div style="position:absolute;left:604.2px;top:904.3px;width:27.4px;height:27.4px;border:3px solid #4a4a4a;border-radius:5.5px;box-sizing:border-box;background:#fff"></div>
<svg style="position:absolute;left:666px;top:896px;overflow:visible;" width="44" height="44" viewBox="-22 -22 44 44"><g fill="none" stroke="#128345" stroke-width="2.6" stroke-linecap="round" stroke-linejoin="round"><path d="M-17,-7 V-11.5 a2.5 2.5 0 0 1 2.5 -2.5 H-6 l4.5,4.5 H14.5 a2.5 2.5 0 0 1 2.5 2.5 V11 a2.5 2.5 0 0 1 -2.5 2.5 H-14.5 a2.5 2.5 0 0 1 -2.5 -2.5 Z" fill="#deeee5"/><path d="M-17,-7 V-11.5 a2.5 2.5 0 0 1 2.5 -2.5 H-6 l4.5,4.5 V-7 Z" fill="#128345"/><path d="M-17,-7.3 H-1" /></g></svg>
<div style="position:absolute;left:755px;top:901.3px;line-height:34px;font-size:26px;font-weight:400;color:#222;letter-spacing:0.56px;white-space:pre;-webkit-text-stroke:0.18px currentColor;">Monthly Expense Report</div>
<div style="position:absolute;left:1703px;top:902.3px;line-height:34px;font-size:26px;font-weight:400;color:#444;letter-spacing:-0.41px;white-space:pre;-webkit-text-stroke:0.18px currentColor;">l..</div>
<div style="position:absolute;left:562px;top:959px;width:1282px;height:82.6px;border-bottom:2px solid #ececec;border-bottom-left-radius:16px"></div>
<div style="position:absolute;left:604.2px;top:986.3px;width:27.4px;height:27.4px;border:3px solid #4a4a4a;border-radius:5.5px;box-sizing:border-box;background:#fff"></div>
<svg style="position:absolute;left:666px;top:978px;overflow:visible;" width="44" height="44" viewBox="-22 -22 44 44"><g fill="none" stroke="#128345" stroke-width="2.6" stroke-linecap="round" stroke-linejoin="round"><path d="M-17,-7 V-11.5 a2.5 2.5 0 0 1 2.5 -2.5 H-6 l4.5,4.5 H14.5 a2.5 2.5 0 0 1 2.5 2.5 V11 a2.5 2.5 0 0 1 -2.5 2.5 H-14.5 a2.5 2.5 0 0 1 -2.5 -2.5 Z" fill="#deeee5"/><path d="M-17,-7 V-11.5 a2.5 2.5 0 0 1 2.5 -2.5 H-6 l4.5,4.5 V-7 Z" fill="#128345"/><path d="M-17,-7.3 H-1" /></g></svg>
<div style="position:absolute;left:755px;top:983.3px;line-height:34px;font-size:26px;font-weight:400;color:#222;letter-spacing:0.46px;white-space:pre;-webkit-text-stroke:0.18px currentColor;">Webinars</div>
<div style="position:absolute;left:1703px;top:984.3px;line-height:34px;font-size:26px;font-weight:400;color:#444;letter-spacing:-0.41px;white-space:pre;-webkit-text-stroke:0.18px currentColor;">l..</div>
<div style="position:absolute;left:562px;top:1041.5px;width:1282px;height:80px;background:#e8f1ec;border-radius:14px 0 0 14px"></div>
<div style="position:absolute;left:598px;top:1062px;width:40px;height:40px;background:#f7faf8;border-radius:9px"></div>
<div style="position:absolute;left:604px;top:1068px;width:28px;height:28px;background:#107c41;border-radius:5px"></div>
<svg style="position:absolute;left:596px;top:1060px;overflow:visible;" width="44" height="44" viewBox="-22 -22 44 44"><g fill="none" stroke="#fff" stroke-width="3.6" stroke-linecap="round" stroke-linejoin="round"><path d="M-7,0.5 L-2.2,5.2 L7,-4.2"/></g></svg>
<svg style="position:absolute;left:666px;top:1060px;overflow:visible;" width="44" height="44" viewBox="-22 -22 44 44"><g fill="none" stroke="#2a6fc0" stroke-width="2.6" stroke-linecap="round" stroke-linejoin="round"><path d="M4,-13.5 H-12.5 a4 4 0 0 0 -4 4 V9.5 a4 4 0 0 0 4 4 H6.5 a4 4 0 0 0 4 -4 V1.5"/><path d="M16.5,-13 V-0.5 L6.5,-6.8 Z" stroke-width="2.3"/><path d="M-10.5,-5.5 H-4 M-10.5,0.5 H1 M-10.5,6.5 H-1.5" stroke-width="2.6"/></g></svg>
<div style="position:absolute;left:755px;top:1065.3px;line-height:34px;font-size:26px;font-weight:400;color:#222;letter-spacing:0.53px;white-space:pre;-webkit-text-stroke:0.18px currentColor;">List of folders for deck</div>
<div style="position:absolute;left:1703px;top:1066.3px;line-height:34px;font-size:26px;font-weight:400;color:#444;letter-spacing:-0.41px;white-space:pre;-webkit-text-stroke:0.18px currentColor;">l..</div>
<svg style="position:absolute;left:1767px;top:1067px;overflow:visible;" width="10" height="30" viewBox="-5 -15 10 30"><circle cy="-9" r="3.3" fill="#444"/><circle cy="0" r="3.3" fill="#444"/><circle cy="9" r="3.3" fill="#444"/></svg>
<div style="position:absolute;left:562px;top:202.3px;width:1284px;height:99.5px;background:#fff;border-radius:9px;box-shadow:0 2px 8px rgba(0,0,0,.16), 0 0 24px rgba(0,0,0,.06)"></div>
<div style="position:absolute;left:602px;top:238px;width:27px;height:27px;background:#0f7f45;border-radius:3.5px"></div>
<div style="position:absolute;left:608px;top:249.5px;width:15px;height:4px;background:#fff;border-radius:1px"></div>
<div style="position:absolute;left:654px;top:235.3px;line-height:34px;font-size:26.5px;font-weight:700;color:#0b5f33;letter-spacing:-0.26px;white-space:pre;-webkit-text-stroke:0;-webkit-text-stroke:0.5px #0b5f33 !important;">1 file selected</div>
<div style="position:absolute;left:860px;top:219.8px;width:260px;height:63.4px;border:2px solid #86bc9b;border-radius:15px;box-sizing:border-box"></div>
<div style="position:absolute;left:1028px;top:220px;width:2.2px;height:63px;background:#55a077"></div>
<svg style="position:absolute;left:882px;top:230px;overflow:visible;" width="44" height="44" viewBox="-22 -22 44 44"><g fill="none" stroke="#0b5f33" stroke-width="3.6666666666666665" stroke-linecap="round" stroke-linejoin="round"><g transform="scale(0.9)"><path d="M3,-12.5 L15.5,0 L3,12.5 V5.8 C-6,5.5 -11.5,8 -15.5,12.5 C-15,1 -8,-6 3,-6.2 Z"/></g></g></svg>
<div style="position:absolute;left:935px;top:235.3px;line-height:34px;font-size:26.5px;font-weight:400;color:#0b5f33;letter-spacing:-0.54px;white-space:pre;-webkit-text-stroke:0.18px currentColor;">Share</div>
<svg style="position:absolute;left:1042px;top:230px;overflow:visible;" width="44" height="44" viewBox="-22 -22 44 44"><g fill="none" stroke="#0d6b3a" stroke-width="3" stroke-linecap="round" stroke-linejoin="round"><path d="M-15,-8 L0,7 L15,-8"/></g></svg>
<div style="position:absolute;left:1703px;top:236.8px;line-height:31px;font-size:24px;font-weight:400;color:#222;letter-spacing:-1.01px;white-space:pre;-webkit-text-stroke:0.18px currentColor;">Esc</div>
<svg style="position:absolute;left:1746px;top:230px;overflow:visible;" width="44" height="44" viewBox="-22 -22 44 44"><g fill="none" stroke="#222" stroke-width="2.6" stroke-linecap="round" stroke-linejoin="round"><path d="M-10,-10 L10,10 M10,-10 L-10,10"/></g></svg>
<div style="position:absolute;left:1875.6px;top:194px;width:160.4px;height:1354px;background:#fff;border-left:2px solid #ededed;border-top-left-radius:6px;border-bottom-right-radius:40px"></div>
<svg style="position:absolute;left:1938px;top:250.7px;overflow:visible;" width="44" height="44" viewBox="-22 -22 44 44"><g fill="none" stroke="#444" stroke-width="2.6" stroke-linecap="round" stroke-linejoin="round"><circle r="13.6"/><path d="M0,-1 V6.5" stroke-width="3"/><circle cx="-0.3" cy="-6" r="1.7" fill="#444" stroke="none"/><path d="M-2,-1 H0" stroke-width="2.2"/></g></svg>
<div style="position:absolute;left:1922.45px;top:309.8px;line-height:32px;font-size:24.5px;font-weight:400;color:#222;letter-spacing:-0.06px;white-space:pre;-webkit-text-stroke:0.18px currentColor;">Details</div>
<svg style="position:absolute;left:1937.5px;top:393.5px;overflow:visible;" width="44" height="44" viewBox="-22 -22 44 44"><g fill="none" stroke="#444" stroke-width="2.5" stroke-linecap="round" stroke-linejoin="round"><path d="M-11,-10.5 H7 L13.8,-3.5 L7,3.5 H-11 a3 3 0 0 1 -3 -3 V-7.5 a3 3 0 0 1 3 -3 Z"/><path d="M-7,-3.5 H-1" /><circle cx="6.5" cy="-3.5" r="1.5" fill="#444" stroke="none"/><path d="M-14,7 a3.5 3.5 0 0 0 3.5 3.5 H7.5 L12.5,7.5"/></g></svg>
<div style="position:absolute;left:1934.7px;top:453.1px;line-height:32px;font-size:24.5px;font-weight:400;color:#222;letter-spacing:-0.44px;white-space:pre;-webkit-text-stroke:0.18px currentColor;">Data</div>
<div style="position:absolute;left:1902.75px;top:489.8px;line-height:32px;font-size:24.5px;font-weight:400;color:#222;letter-spacing:0.31px;white-space:pre;-webkit-text-stroke:0.18px currentColor;">Templates</div>
<svg style="position:absolute;left:1938px;top:573.8px;overflow:visible;" width="44" height="44" viewBox="-22 -22 44 44"><g fill="none" stroke="#444" stroke-width="2.840909090909091" stroke-linecap="round" stroke-linejoin="round"><g transform="scale(0.88)"><path d="M-16.3,-4.2 H-9.4 Q-6.9,-4.2 -8.2,-2 L-15,11.6 Q-16.4,15 -12.8,15 H-2.8 Q-0.9,15 0.1,13.2 L8.4,0.2 Q9.8,-1.8 10.9,0.6 L15.8,12.6 Q16.8,15.6 13.8,14.4 L-2.2,7.2 Q-4.6,6 -3.2,3.8 L1.7,-1.7"/><path d="M2.5,-16.6 Q3.4,-11 9,-10 Q3.4,-9 2.5,-3.4 Q1.6,-9 -4,-10 Q1.6,-11 2.5,-16.6 Z" fill="#444" stroke="none"/><path d="M11,-17 Q11.5,-13.9 14.6,-13.4 Q11.5,-12.9 11,-9.8 Q10.5,-12.9 7.4,-13.4 Q10.5,-13.9 11,-17 Z" fill="#444" stroke="none"/></g></g></svg>
<div style="position:absolute;left:1943.7px;top:632.6px;line-height:32px;font-size:24.5px;font-weight:400;color:#222;letter-spacing:-0.68px;white-space:pre;-webkit-text-stroke:0.18px currentColor;">Zia</div>
<svg style="position:absolute;left:1938px;top:1382px;overflow:visible;" width="44" height="44" viewBox="-22 -22 44 44"><g fill="none" stroke="#444" stroke-width="2.4" stroke-linecap="round" stroke-linejoin="round"><circle r="14.2" stroke-width="2.4"/><circle cx="0" cy="-7" r="2.6" fill="#444" stroke="none"/><path d="M-8,-2.5 Q0,-0.5 8,-2.5" stroke-width="2.6"/><path d="M0,-1.5 V2.5 L-4.5,9.5 M0,2.5 L4.5,9.5" stroke-width="2.8"/></g></svg>
<svg style="position:absolute;left:1937.5px;top:1458px;overflow:visible;" width="44" height="44" viewBox="-22 -22 44 44"><g fill="none" stroke="#444" stroke-width="2.6" stroke-linecap="round" stroke-linejoin="round"><path d="M-2.5,-13.5 C-9,-6 -6,7.5 13.5,7 C9.5,13.5 -3,16 -10,8.5 C-15.5,2 -13,-9.5 -2.5,-13.5 Z"/></g></svg>
<div style="position:absolute;left:1060.5px;top:6.6px;width:639px;height:1520.7px;background:#fff;border:1.3px solid #e9e9e9;border-radius:15px;box-shadow:0 10px 40px rgba(0,0,0,.10), 0 2px 12px rgba(0,0,0,.05)"></div>
<div style="position:absolute;left:1078px;top:256.5px;width:604px;height:2px;background:#ebebeb"></div>
<div style="position:absolute;left:1078px;top:432px;width:604px;height:2px;background:#ebebeb"></div>
<div style="position:absolute;left:1078px;top:817.5px;width:604px;height:2px;background:#ebebeb"></div>
<div style="position:absolute;left:1078px;top:1412px;width:604px;height:2px;background:#ebebeb"></div>
<div style="position:absolute;left:1078px;top:909px;width:604px;height:68px;background:#f5f5f5;border-radius:10px"></div>
<div style="position:absolute;left:1080px;top:906px;width:596px;height:78px;border:6px solid #e60b0b;box-sizing:border-box"></div>
<div style="position:absolute;left:1197.2px;top:48.3px;line-height:36px;font-size:28px;font-weight:400;color:#222;letter-spacing:-0.01px;white-space:pre;-webkit-text-stroke:0.18px currentColor;">Preview</div>
<svg style="position:absolute;left:1113px;top:44px;overflow:visible;" width="44" height="44" viewBox="-22 -22 44 44"><g fill="none" stroke="#444" stroke-width="3.25" stroke-linecap="round" stroke-linejoin="round"><path d="M-17,0 C-12,-9 -6,-12.5 0,-12.5 C6,-12.5 12,-9 17,0 C12,9 6,12.5 0,12.5 C-6,12.5 -12,9 -17,0 Z"/><circle r="5.2"/></g></svg>
<div style="position:absolute;left:1197.2px;top:118.3px;line-height:36px;font-size:28px;font-weight:400;color:#222;letter-spacing:0.47px;white-space:pre;-webkit-text-stroke:0.18px currentColor;">Open With</div>
<svg style="position:absolute;left:1113.5px;top:113.5px;overflow:visible;" width="44" height="44" viewBox="-22 -22 44 44"><g fill="none" stroke="#444" stroke-width="3.25" stroke-linecap="round" stroke-linejoin="round"><path d="M-14.5,-5 V-10 a4.5 4.5 0 0 1 4.5 -4.5 H10 a4.5 4.5 0 0 1 4.5 4.5 V10 a4.5 4.5 0 0 1 -4.5 4.5 H-1"/><path d="M-13.5,13.5 L6,-6 M-2.5,-6.6 H6.6 V2.5"/></g></svg>
<div style="position:absolute;left:1197.2px;top:188.3px;line-height:36px;font-size:28px;font-weight:400;color:#222;letter-spacing:0.34px;white-space:pre;-webkit-text-stroke:0.18px currentColor;">Properties</div>
<svg style="position:absolute;left:1113px;top:184px;overflow:visible;" width="44" height="44" viewBox="-22 -22 44 44"><g fill="none" stroke="#444" stroke-width="3.25" stroke-linecap="round" stroke-linejoin="round"><rect x="-14.8" y="-14.5" width="29.6" height="29" rx="4.5"/><path d="M-7.6,-4.6 H-6.4 M1,-4.6 H7.6 M-7.6,4.6 H-6.4 M1,4.6 H7.6" stroke-width="3.5"/></g></svg>
<div style="position:absolute;left:1197.2px;top:294.3px;line-height:36px;font-size:28px;font-weight:400;color:#222;letter-spacing:-0.01px;white-space:pre;-webkit-text-stroke:0.18px currentColor;">Share...</div>
<svg style="position:absolute;left:1113px;top:289.5px;overflow:visible;" width="44" height="44" viewBox="-22 -22 44 44"><g fill="none" stroke="#444" stroke-width="3.009259259259259" stroke-linecap="round" stroke-linejoin="round"><g transform="scale(1.08)"><path d="M3,-12.5 L15.5,0 L3,12.5 V5.8 C-6,5.5 -11.5,8 -15.5,12.5 C-15,1 -8,-6 3,-6.2 Z"/></g></g></svg>
<div style="position:absolute;left:1197.2px;top:364.3px;line-height:36px;font-size:28px;font-weight:400;color:#222;letter-spacing:0.28px;white-space:pre;-webkit-text-stroke:0.18px currentColor;">Copy Permalink</div>
<svg style="position:absolute;left:1113px;top:360px;overflow:visible;" width="44" height="44" viewBox="-22 -22 44 44"><g fill="none" stroke="#444" stroke-width="3.25" stroke-linecap="round" stroke-linejoin="round"><path d="M-4.2,4.2 L4.4,-4.2"/><path d="M-1.75,-11.6 A9.6 9.6 0 1 1 11.8,1.95"/><path d="M1.75,11.6 A9.6 9.6 0 1 1 -11.8,-1.95"/></g></svg>
<div style="position:absolute;left:1197.2px;top:470.3px;line-height:36px;font-size:28px;font-weight:400;color:#222;letter-spacing:0.28px;white-space:pre;-webkit-text-stroke:0.18px currentColor;">Move To...</div>
<svg style="position:absolute;left:1113px;top:465.5px;overflow:visible;" width="44" height="44" viewBox="-22 -22 44 44"><g fill="none" stroke="#444" stroke-width="3.25" stroke-linecap="round" stroke-linejoin="round"><path d="M-16.5,-7.5 V-10.5 a3 3 0 0 1 3 -3 H-6.5 l4 3.5 H13.5 a3 3 0 0 1 3 3 V10 a3 3 0 0 1 -3 3 H-13.5 a3 3 0 0 1 -3 -3 Z"/><path d="M-5,1.5 H5 M1.8,-2.2 L5.5,1.5 L1.8,5.2" stroke-width="2.6"/></g></svg>
<div style="position:absolute;left:1197.2px;top:539.3px;line-height:36px;font-size:28px;font-weight:400;color:#222;letter-spacing:0.39px;white-space:pre;-webkit-text-stroke:0.18px currentColor;">Copy To...</div>
<svg style="position:absolute;left:1113px;top:535px;overflow:visible;" width="44" height="44" viewBox="-22 -22 44 44"><g fill="none" stroke="#444" stroke-width="3.25" stroke-linecap="round" stroke-linejoin="round"><rect x="-14.5" y="-7.5" width="22" height="22" rx="4.5"/><path d="M-7.5,-11.5 a3.6 3.6 0 0 1 3.5 -3 H10 a4.5 4.5 0 0 1 4.5 4.5 V6"/></g></svg>
<div style="position:absolute;left:1197.2px;top:609.3px;line-height:36px;font-size:28px;font-weight:400;color:#222;letter-spacing:0.40px;white-space:pre;-webkit-text-stroke:0.18px currentColor;">Add Classification Label</div>
<svg style="position:absolute;left:1113px;top:605px;overflow:visible;" width="44" height="44" viewBox="-22 -22 44 44"><g fill="none" stroke="#444" stroke-width="3.25" stroke-linecap="round" stroke-linejoin="round"><path d="M0,-16 C-4,-12 -10,-10.2 -16,-10 C-17.2,3 -10,12.5 0,16.5 C10,12.5 17.2,3 16,-10 C10,-10.2 4,-12 0,-16 Z"/></g></svg>
<div style="position:absolute;left:1197.2px;top:679.3px;line-height:36px;font-size:28px;font-weight:400;color:#222;letter-spacing:0.49px;white-space:pre;-webkit-text-stroke:0.18px currentColor;">Start a workflow</div>
<svg style="position:absolute;left:1113px;top:675px;overflow:visible;" width="44" height="44" viewBox="-22 -22 44 44"><g fill="none" stroke="#444" stroke-width="3.009259259259259" stroke-linecap="round" stroke-linejoin="round"><g transform="scale(1.08)"><rect x="-15.5" y="-14.8" width="7.6" height="7.2" rx="1.2"/><path d="M-7.8,-11 H6 a6 6 0 0 1 0 12 H3.8"/><path d="M-5.2,1 H-9 a5 5 0 0 0 0 10 H5"/><path d="M-0.7,-3.7 L4,1 L-0.7,5.7 L-5.4,1 Z"/><circle cx="9.2" cy="11" r="4.1"/></g></g></svg>
<div style="position:absolute;left:1197.2px;top:749.3px;line-height:36px;font-size:28px;font-weight:400;color:#222;letter-spacing:0.30px;white-space:pre;-webkit-text-stroke:0.18px currentColor;">Organize</div>
<svg style="position:absolute;left:1113px;top:745px;overflow:visible;" width="44" height="44" viewBox="-22 -22 44 44"><g fill="none" stroke="#444" stroke-width="3.25" stroke-linecap="round" stroke-linejoin="round"><path d="M16.80,0.00 L16.78,0.73 L16.71,1.46 L16.57,2.18 L16.27,2.87 L15.61,3.46 L14.44,3.87 L13.27,4.18 L12.58,4.58 L12.19,5.05 L11.90,5.55 L11.62,6.05 L11.34,6.55 L11.05,7.04 L10.75,7.53 L10.47,8.03 L10.25,8.60 L10.26,9.40 L10.57,10.57 L10.80,11.79 L10.62,12.65 L10.17,13.26 L9.62,13.74 L9.02,14.16 L8.40,14.55 L7.75,14.90 L7.09,15.20 L6.39,15.44 L5.65,15.52 L4.81,15.25 L3.87,14.44 L3.01,13.58 L2.32,13.18 L1.72,13.08 L1.14,13.08 L0.57,13.09 L0.00,13.10 L-0.57,13.09 L-1.14,13.08 L-1.72,13.08 L-2.32,13.18 L-3.01,13.58 L-3.87,14.44 L-4.81,15.25 L-5.65,15.52 L-6.39,15.44 L-7.09,15.20 L-7.75,14.90 L-8.40,14.55 L-9.02,14.16 L-9.62,13.74 L-10.17,13.26 L-10.62,12.65 L-10.80,11.79 L-10.57,10.57 L-10.26,9.40 L-10.25,8.60 L-10.47,8.03 L-10.75,7.53 L-11.05,7.04 L-11.34,6.55 L-11.62,6.05 L-11.90,5.55 L-12.19,5.05 L-12.58,4.58 L-13.27,4.18 L-14.44,3.87 L-15.61,3.46 L-16.27,2.87 L-16.57,2.18 L-16.71,1.46 L-16.78,0.73 L-16.80,0.00 L-16.78,-0.73 L-16.71,-1.46 L-16.57,-2.18 L-16.27,-2.87 L-15.61,-3.46 L-14.44,-3.87 L-13.27,-4.18 L-12.58,-4.58 L-12.19,-5.05 L-11.90,-5.55 L-11.62,-6.05 L-11.34,-6.55 L-11.05,-7.04 L-10.75,-7.53 L-10.47,-8.03 L-10.25,-8.60 L-10.26,-9.40 L-10.57,-10.57 L-10.80,-11.79 L-10.62,-12.65 L-10.17,-13.26 L-9.62,-13.74 L-9.02,-14.16 L-8.40,-14.55 L-7.75,-14.90 L-7.09,-15.20 L-6.39,-15.44 L-5.65,-15.52 L-4.81,-15.25 L-3.87,-14.44 L-3.01,-13.58 L-2.32,-13.18 L-1.72,-13.08 L-1.14,-13.08 L-0.57,-13.09 L-0.00,-13.10 L0.57,-13.09 L1.14,-13.08 L1.72,-13.08 L2.32,-13.18 L3.01,-13.58 L3.87,-14.44 L4.81,-15.25 L5.65,-15.52 L6.39,-15.44 L7.09,-15.20 L7.75,-14.90 L8.40,-14.55 L9.02,-14.16 L9.62,-13.74 L10.17,-13.26 L10.62,-12.65 L10.80,-11.79 L10.57,-10.57 L10.26,-9.40 L10.25,-8.60 L10.47,-8.03 L10.75,-7.53 L11.05,-7.04 L11.34,-6.55 L11.62,-6.05 L11.90,-5.55 L12.19,-5.05 L12.58,-4.58 L13.27,-4.18 L14.44,-3.87 L15.61,-3.46 L16.27,-2.87 L16.57,-2.18 L16.71,-1.46 L16.78,-0.73 Z"/><circle r="5.4"/></g></svg>
<div style="position:absolute;left:1197.2px;top:855.3px;line-height:36px;font-size:28px;font-weight:400;color:#222;letter-spacing:0.68px;white-space:pre;-webkit-text-stroke:0.18px currentColor;">Download</div>
<svg style="position:absolute;left:1113px;top:851px;overflow:visible;" width="44" height="44" viewBox="-22 -22 44 44"><g fill="none" stroke="#444" stroke-width="3.25" stroke-linecap="round" stroke-linejoin="round"><path d="M-13,14.5 H13"/><path d="M-3.5,-3.8 V-12.3 a3.5 3.5 0 0 1 7 0 V-3.8 H10.2 Q13.8,-3.6 11.6,-1.2 L1.8,6.6 Q0,7.9 -1.8,6.6 L-11.6,-1.2 Q-13.8,-3.6 -10.2,-3.8 Z"/></g></svg>
<div style="position:absolute;left:1197.2px;top:925.3px;line-height:36px;font-size:28px;font-weight:400;color:#222;letter-spacing:0.32px;white-space:pre;-webkit-text-stroke:0.18px currentColor;">Remove file from Index</div>
<svg style="position:absolute;left:1113px;top:921px;overflow:visible;" width="44" height="44" viewBox="-22 -22 44 44"><g fill="none" stroke="#444" stroke-width="3.25" stroke-linecap="round" stroke-linejoin="round"><circle r="16.5"/><path d="M-4.8,-4.8 L4.8,4.8 M4.8,-4.8 L-4.8,4.8"/></g></svg>
<div style="position:absolute;left:1197.2px;top:994.8px;line-height:36px;font-size:28px;font-weight:400;color:#222;letter-spacing:-0.22px;white-space:pre;-webkit-text-stroke:0.18px currentColor;">Rename</div>
<svg style="position:absolute;left:1113px;top:990px;overflow:visible;" width="44" height="44" viewBox="-22 -22 44 44"><g fill="none" stroke="#444" stroke-width="3.25" stroke-linecap="round" stroke-linejoin="round"><path d="M-13,14.6 H13"/><path d="M-12.6,4.4 V3.7 Q-12.6,2.7 -11.9,2 L4.9,-14.8 Q6.7,-16.6 8.5,-14.8 L9.5,-13.8 Q11.3,-12 9.5,-10.2 L-6.4,5.7 Q-7.1,6.4 -8.1,6.4 H-10.6 Q-12.6,6.4 -12.6,4.4 Z"/></g></svg>
<div style="position:absolute;left:1197.2px;top:1064.3px;line-height:36px;font-size:28px;font-weight:400;color:#222;letter-spacing:-0.07px;white-space:pre;-webkit-text-stroke:0.18px currentColor;">Save as Template</div>
<svg style="position:absolute;left:1113px;top:1060px;overflow:visible;" width="44" height="44" viewBox="-22 -22 44 44"><g fill="none" stroke="#444" stroke-width="3.25" stroke-linecap="round" stroke-linejoin="round"><rect x="-14.8" y="-14.5" width="29.6" height="29" rx="4.5"/><path d="M-14.5,-5.5 H14.5 M-5.5,-5.5 V14"/><path d="M0.5,1.5 H8.5 M0.5,7.5 H5.5" stroke-width="3.2"/></g></svg>
<div style="position:absolute;left:1197.2px;top:1134.3px;line-height:36px;font-size:28px;font-weight:400;color:#222;letter-spacing:0.61px;white-space:pre;-webkit-text-stroke:0.18px currentColor;">Check Out...</div>
<svg style="position:absolute;left:1113px;top:1130px;overflow:visible;" width="44" height="44" viewBox="-22 -22 44 44"><g fill="none" stroke="#444" stroke-width="3.25" stroke-linecap="round" stroke-linejoin="round"><path d="M13,-3 V-12.5 a4 4 0 0 0 -4 -4 H-9 a4 4 0 0 0 -4 4 V12.5 a4 4 0 0 0 4 4 H-3"/><path d="M-6.5,-9 H5 M-6.5,-2.5 H0" stroke-width="3"/><path d="M2.5,5.5 L13,16 M4.5,16.3 H13.3 V7.5"/></g></svg>
<div style="position:absolute;left:1197.2px;top:1204.3px;line-height:36px;font-size:28px;font-weight:400;color:#222;letter-spacing:-0.39px;white-space:pre;-webkit-text-stroke:0.18px currentColor;">Mark as Final</div>
<svg style="position:absolute;left:1113px;top:1200px;overflow:visible;" width="44" height="44" viewBox="-22 -22 44 44"><g fill="none" stroke="#444" stroke-width="3.25" stroke-linecap="round" stroke-linejoin="round"><circle r="16.5"/><path d="M-7,0.8 L-2,5.8 L8.2,-5"/></g></svg>
<div style="position:absolute;left:1197.2px;top:1274.3px;line-height:36px;font-size:28px;font-weight:400;color:#222;letter-spacing:0.48px;white-space:pre;-webkit-text-stroke:0.18px currentColor;">Follow updates</div>
<svg style="position:absolute;left:1113px;top:1270px;overflow:visible;" width="44" height="44" viewBox="-22 -22 44 44"><g fill="none" stroke="#444" stroke-width="3.25" stroke-linecap="round" stroke-linejoin="round"><g transform="scale(1.0)"><path d="M-9.6,2 V-6.4 a9.6 9.6 0 0 1 19.2 0 V2 C9.6,4.5 13.6,5.3 13.4,8 Q13.2,9.6 11.5,9.6 H-11.5 Q-13.2,9.6 -13.4,8 C-13.6,5.3 -9.6,4.5 -9.6,2 Z"/><path d="M-4.6,13.4 a4.8 4.8 0 0 0 9.2 0"/></g></g></svg>
<div style="position:absolute;left:1197.2px;top:1344.3px;line-height:36px;font-size:28px;font-weight:400;color:#222;letter-spacing:0.51px;white-space:pre;-webkit-text-stroke:0.18px currentColor;">More options</div>
<svg style="position:absolute;left:1115px;top:1357px;overflow:visible;" width="40" height="10" viewBox="-20 -5 40 10"><circle cx="-11.3" r="3.3" fill="#444"/><circle cx="0" r="3.3" fill="#444"/><circle cx="11.3" r="3.3" fill="#444"/></svg>
<div style="position:absolute;left:1197.2px;top:1450.3px;line-height:36px;font-size:28px;font-weight:400;color:#a31515;letter-spacing:0.01px;white-space:pre;-webkit-text-stroke:0.18px currentColor;">Move to Trash</div>
<svg style="position:absolute;left:1113px;top:1446px;overflow:visible;" width="44" height="44" viewBox="-22 -22 44 44"><g fill="none" stroke="#b54a4a" stroke-width="3.25" stroke-linecap="round" stroke-linejoin="round"><path d="M-15,-10.5 H15"/><path d="M-6,-11 V-14 a2.5 2.5 0 0 1 2.5 -2.5 H3.5 a2.5 2.5 0 0 1 2.5 2.5 V-11"/><path d="M-11.5,-10 V12.5 a4 4 0 0 0 4 4 H7.5 a4 4 0 0 0 4 -4 V-10"/><path d="M-3.8,-2.5 V8.5 M3.8,-2.5 V8.5" stroke-width="3.2"/></g></svg>
<svg style="position:absolute;left:1623px;top:114px;overflow:visible;" width="44" height="44" viewBox="-22 -22 44 44"><g fill="none" stroke="#444" stroke-width="2.4" stroke-linecap="round" stroke-linejoin="round"><path d="M-4.6,-8.8 L4.6,0 L-4.6,8.8"/></g></svg>
<svg style="position:absolute;left:1623px;top:290px;overflow:visible;" width="44" height="44" viewBox="-22 -22 44 44"><g fill="none" stroke="#444" stroke-width="2.4" stroke-linecap="round" stroke-linejoin="round"><path d="M-4.6,-8.8 L4.6,0 L-4.6,8.8"/></g></svg>
<svg style="position:absolute;left:1623px;top:675px;overflow:visible;" width="44" height="44" viewBox="-22 -22 44 44"><g fill="none" stroke="#444" stroke-width="2.4" stroke-linecap="round" stroke-linejoin="round"><path d="M-4.6,-8.8 L4.6,0 L-4.6,8.8"/></g></svg>
<svg style="position:absolute;left:1623px;top:745px;overflow:visible;" width="44" height="44" viewBox="-22 -22 44 44"><g fill="none" stroke="#444" stroke-width="2.4" stroke-linecap="round" stroke-linejoin="round"><path d="M-4.6,-8.8 L4.6,0 L-4.6,8.8"/></g></svg>
<svg style="position:absolute;left:1623px;top:1060px;overflow:visible;" width="44" height="44" viewBox="-22 -22 44 44"><g fill="none" stroke="#444" stroke-width="2.4" stroke-linecap="round" stroke-linejoin="round"><path d="M-4.6,-8.8 L4.6,0 L-4.6,8.8"/></g></svg>
<svg style="position:absolute;left:1623px;top:1340px;overflow:visible;" width="44" height="44" viewBox="-22 -22 44 44"><g fill="none" stroke="#444" stroke-width="2.4" stroke-linecap="round" stroke-linejoin="round"><path d="M-4.6,-8.8 L4.6,0 L-4.6,8.8"/></g></svg>
<div style="position:absolute;left:1497px;top:50.3px;line-height:32px;font-size:25px;font-weight:400;color:#555;letter-spacing:-0.34px;white-space:pre;-webkit-text-stroke:0.18px currentColor;">Space / Return</div>
<div style="position:absolute;left:1645.5px;top:472.3px;line-height:32px;font-size:25px;font-weight:400;color:#555;letter-spacing:-1.78px;white-space:pre;-webkit-text-stroke:0.18px currentColor;">Z</div>
<div style="position:absolute;left:1643px;top:541.3px;line-height:32px;font-size:25px;font-weight:400;color:#555;letter-spacing:-2.06px;white-space:pre;-webkit-text-stroke:0.18px currentColor;">C</div>
<div style="position:absolute;left:1644px;top:857.3px;line-height:32px;font-size:25px;font-weight:400;color:#555;letter-spacing:-1.69px;white-space:pre;-webkit-text-stroke:0.18px currentColor;">S</div>
<svg style="position:absolute;left:1612px;top:851px;overflow:visible;" width="44" height="44" viewBox="-22 -22 44 44"><g fill="none" stroke="#555" stroke-width="1.8" stroke-linecap="round" stroke-linejoin="round"><path d="M-3.2,-3.2 H3.2 V3.2 H-3.2 Z M-3.2,-3.2 H-5.2 a2.3 2.3 0 1 1 2,-2.3 Z M3.2,-3.2 V-5.4 a2.3 2.3 0 1 1 2.3,2.2 Z M3.2,3.2 H5.4 a2.3 2.3 0 1 1 -2.2,2.3 Z M-3.2,3.2 V5.4 a2.3 2.3 0 1 1 -2.3,-2.2 Z"/></g></svg>
<svg style="position:absolute;left:1540.3px;top:931.8px;overflow:visible;filter:drop-shadow(0 1.5px 1.5px rgba(0,0,0,.4));" width="31" height="40" viewBox="0 0 31 40"><path d="M9.4,3.8 C9.4,0.3 15,0.3 15,3.8 V11.6 C15.7,9.6 19.4,9.9 19.5,12.3 V13.8 C20.3,11.9 23.9,12.3 24,14.7 V16.2 C24.9,14.5 28.6,15.1 28.7,17.7 V26.8 C28.7,33.4 24,37.6 17.6,37.6 C11.6,37.6 8.6,34.6 6.2,30 L1.5,19.8 C0.2,16.8 3.5,15 5.1,17.5 L9.4,23.8 Z" fill="#fff" stroke="#0a0a0a" stroke-width="2.3" stroke-linejoin="round"/><path d="M15,11.6 V17.4 M19.5,13.8 V18.6 M24,16.2 V19.6" stroke="#0a0a0a" stroke-width="1.9" fill="none" stroke-linecap="round"/></svg>
</div></body></html>
